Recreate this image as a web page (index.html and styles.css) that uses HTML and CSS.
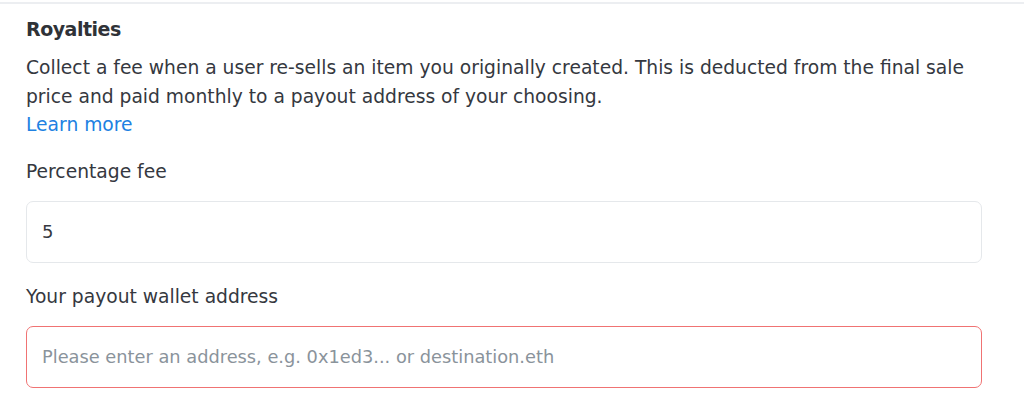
FILE: index.html
```html
<!DOCTYPE html>
<html>
<head>
    <meta charset="utf-8">
    <title>Royalties</title>
    <meta name="viewport" content="width=device-width, initial-scale=1">
    <link rel="stylesheet" href="styles.css">
</head>
<body>
    <div class="divider"></div>

    <section class="royalties">
        <h3>Royalties</h3>
        <p class="desc">
            Collect a fee when a user re-sells an item you originally created. This is deducted from the final sale<br>
            price and paid monthly to a payout address of your choosing.<br>
            <a href="#">Learn more</a>
        </p>

        <div class="field">
            <label for="fee">Percentage fee</label>
            <input id="fee" type="text" value="5">
        </div>

        <div class="field">
            <label for="wallet">Your payout wallet address</label>
            <input id="wallet" class="invalid" type="text" placeholder="Please enter an address, e.g. 0x1ed3... or destination.eth">
        </div>
    </section>
</body>
</html>
```

FILE: styles.css
```css
body {
    margin: 0;
    font-family: "DejaVu Sans", Arial, sans-serif;
    color: #353840;
    background: #fff;
}

.divider {
    margin-top: 2px;
    border-top: 2px solid #eceef1;
}

.royalties {
    padding: 0 42px 0 26px;
}

h3 {
    margin: 11px 0 0;
    font-size: 19px;
    font-weight: 700;
    letter-spacing: -0.5px;
    line-height: 28px;
    color: #2f3237;
}

.desc {
    margin: 11px 0 0;
    font-size: 18.7px;
    line-height: 28.5px;
}

.desc a {
    color: #2081e2;
    text-decoration: none;
}

.field {
    margin-top: 18px;
}

.field + .field {
    margin-top: 20px;
}

label {
    display: block;
    font-size: 18.7px;
    line-height: 28px;
    margin-bottom: 15px;
}

input {
    display: block;
    box-sizing: border-box;
    width: 100%;
    height: 62px;
    padding: 0 15px;
    font-family: inherit;
    font-size: 18px;
    color: #353840;
    border: 1px solid #e5e8eb;
    border-radius: 7px;
    outline: none;
}

input.invalid {
    border-color: #f07373;
}

input::placeholder {
    color: #8a939b;
    font-size: 17.8px;
}
```
